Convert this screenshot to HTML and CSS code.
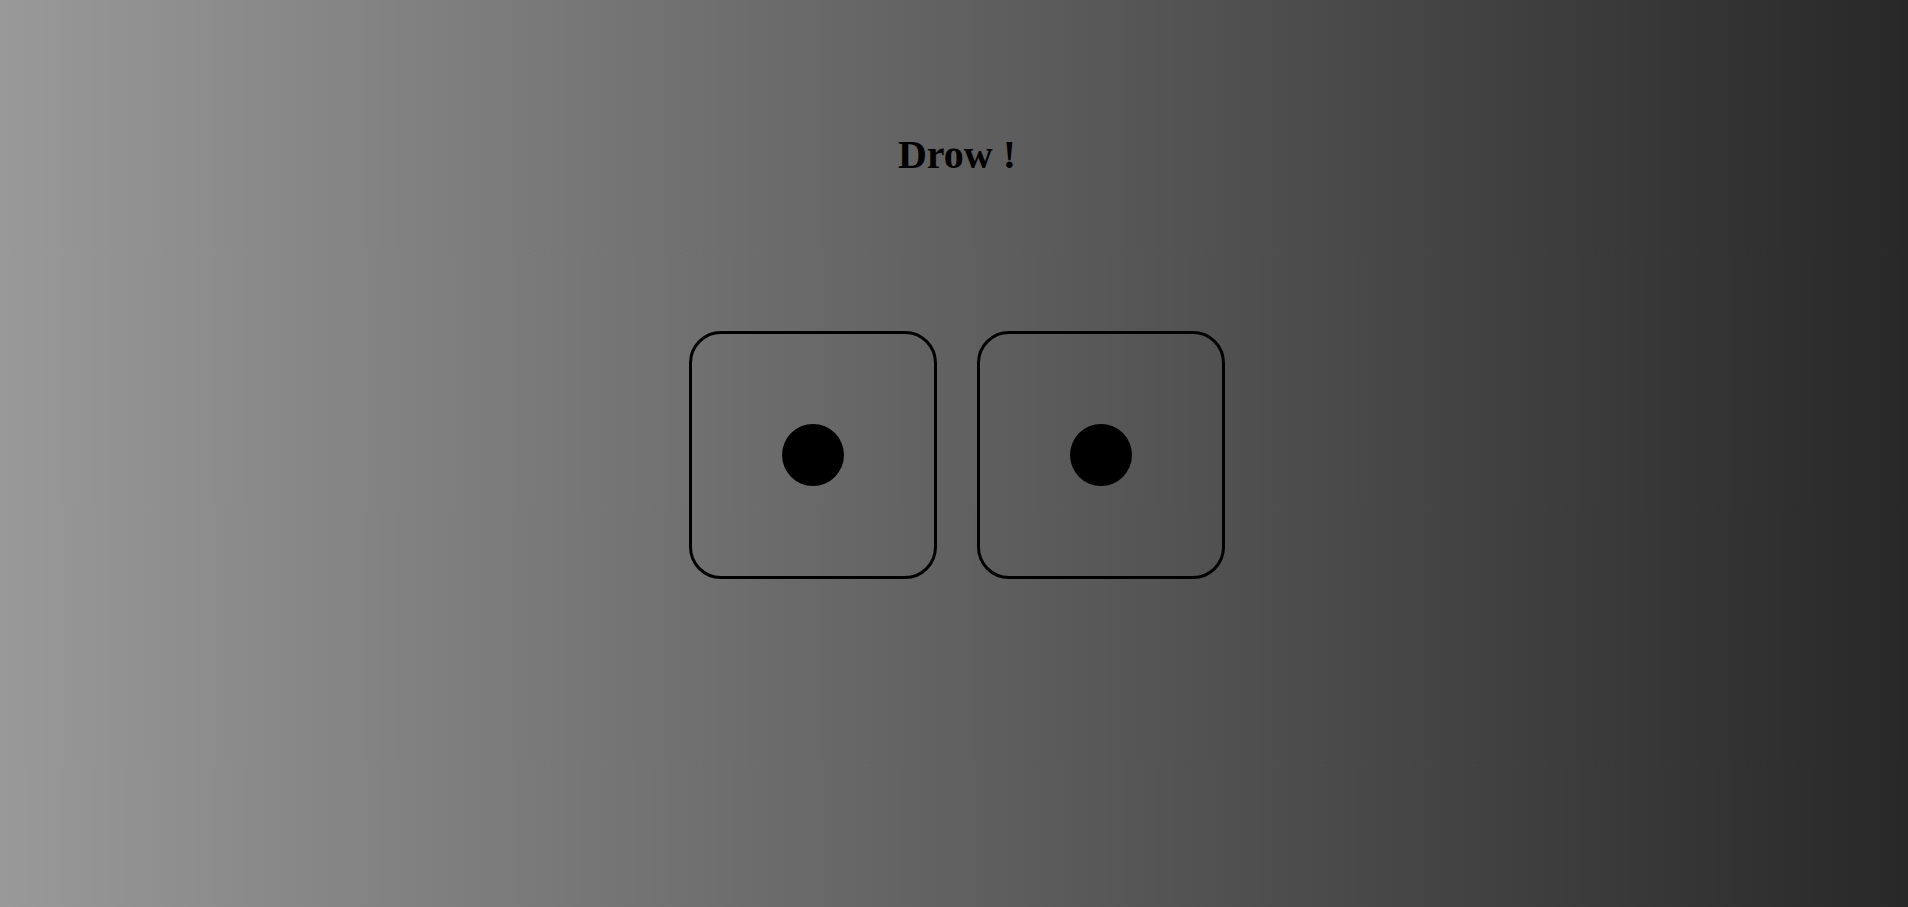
FILE: index.html
```html
<!DOCTYPE html>
<html>
<head>
<meta charset="utf-8">
<link rel="stylesheet" href="styles.css">
</head>
<body>
<main class="page">
  <h1 class="title">Drow !</h1>
  <div class="dice">
    <div class="die"><span class="pip"></span></div>
    <div class="die"><span class="pip"></span></div>
  </div>
</main>
</body>
</html>
```
FILE: styles.css
```css
html, body {
  margin: 0;
  height: 100%;
}
body {
  background: linear-gradient(to right, #999999, #282828);
  font-family: "Liberation Serif", "Times New Roman", serif;
}
.page {
  display: flex;
  flex-direction: column;
  align-items: center;
  padding-left: 6px;
}
.title {
  margin: 0;
  padding-top: 132px;
  font-size: 40px;
  font-weight: bold;
  line-height: 46px;
  color: #000;
}
.dice {
  display: flex;
  gap: 40px;
  margin-top: 153px;
}
.die {
  box-sizing: border-box;
  width: 248px;
  height: 248px;
  border: 3px solid #000;
  border-radius: 32px;
  display: flex;
  align-items: center;
  justify-content: center;
}
.pip {
  width: 62px;
  height: 62px;
  border-radius: 50%;
  background: #000;
}
```
